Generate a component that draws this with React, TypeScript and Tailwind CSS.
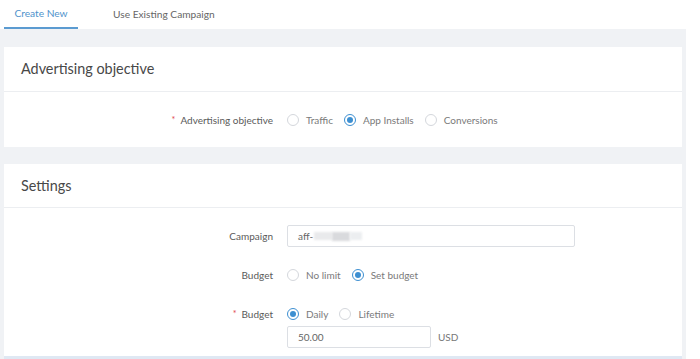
import React from "react";

type Opt = { label: string; checked?: boolean };

function Radio({ label, checked }: Opt) {
  return (
    <label className="flex items-center gap-[7px]">
      <span
        className={`flex h-[12px] w-[12px] items-center justify-center rounded-full border bg-white ${
          checked ? "border-[#3d8fd1]" : "border-[#d4d7dc]"
        }`}
      >
        {checked && <span className="h-[6px] w-[6px] rounded-full bg-[#3d8fd1]" />}
      </span>
      <span>{label}</span>
    </label>
  );
}

function Row({
  label,
  required,
  children,
  className = "",
}: {
  label: string;
  required?: boolean;
  children: React.ReactNode;
  className?: string;
}) {
  return (
    <div className={`flex items-start ${className}`}>
      <div className="flex h-[22px] w-[269px] shrink-0 items-center justify-end text-[#5a5a5a]">
        {required && <span className="mr-[5px] text-[9px] text-[#e0474c]">*</span>}
        {label}
      </div>
      <div className="ml-[14px] flex-1">{children}</div>
    </div>
  );
}

function RadioGroup({ options }: { options: Opt[] }) {
  return (
    <div className="flex h-[22px] items-center gap-[11px] text-[#7a7a7a]">
      {options.map((o) => (
        <Radio key={o.label} {...o} />
      ))}
    </div>
  );
}

export default function App() {
  return (
    <div
      className="h-[359px] w-[700px] overflow-hidden bg-white text-[10px] text-[#555]"
      style={{ fontFamily: 'Lato, "Open Sans", sans-serif' }}
    >
      <div className="w-[686px]">
        <div className="flex h-[29px] items-end pl-[4px] text-[10.2px]">
          <div className="flex h-full w-[74px] items-center justify-center border-b-2 border-[#5b9bd1] text-[#4f93cc]">
            Create New
          </div>
          <div className="flex h-full items-center pl-[35px] text-[#666]">Use Existing Campaign</div>
        </div>

        <div className="bg-[#f0f2f5] px-[4px] pt-[18px]">
          <section className="bg-white">
            <h2 className="flex h-[45px] items-center border-b border-[#eceef1] pl-[17px] text-[14.4px] text-[#484848]">
              Advertising objective
            </h2>
            <div className="h-[55px] pt-[17px]">
              <Row label="Advertising objective" required>
                <RadioGroup
                  options={[{ label: "Traffic" }, { label: "App Installs", checked: true }, { label: "Conversions" }]}
                />
              </Row>
            </div>
          </section>

          <div className="h-[17px]" />

          <section className="h-[192px] bg-white">
            <h2 className="flex h-[44px] items-center border-b border-[#eceef1] pl-[17px] text-[14.4px] text-[#484848]">
              Settings
            </h2>
            <div className="pt-[17px]">
              <Row label="Campaign">
                <div className="flex h-[22px] w-[288px] items-center rounded-[2px] border border-[#dcdfe4] px-[10px] text-[#666]">
                  aff-
                  <span className="ml-[1px] h-[8px] w-[18px] bg-[#e9eaec] blur-[1px]" />
                  <span className="h-[9px] w-[18px] bg-[#d9dadd] blur-[1px]" />
                  <span className="h-[8px] w-[12px] bg-[#eceef0] blur-[1px]" />
                </div>
              </Row>
              <Row label="Budget" className="mt-[17px]">
                <RadioGroup options={[{ label: "No limit" }, { label: "Set budget", checked: true }]} />
              </Row>
              <Row label="Budget" required className="mt-[17px]">
                <RadioGroup options={[{ label: "Daily", checked: true }, { label: "Lifetime" }]} />
                <div className="mt-[1px] flex items-center">
                  <div className="flex h-[22px] w-[144px] items-center rounded-[2px] border border-[#dcdfe4] px-[10px] text-[#666]">
                    50.00
                  </div>
                  <span className="ml-[7px] text-[#777]">USD</span>
                </div>
              </Row>
            </div>
          </section>
          <div className="h-[3px] bg-[#dfe8f3]" />
        </div>
      </div>
    </div>
  );
}
